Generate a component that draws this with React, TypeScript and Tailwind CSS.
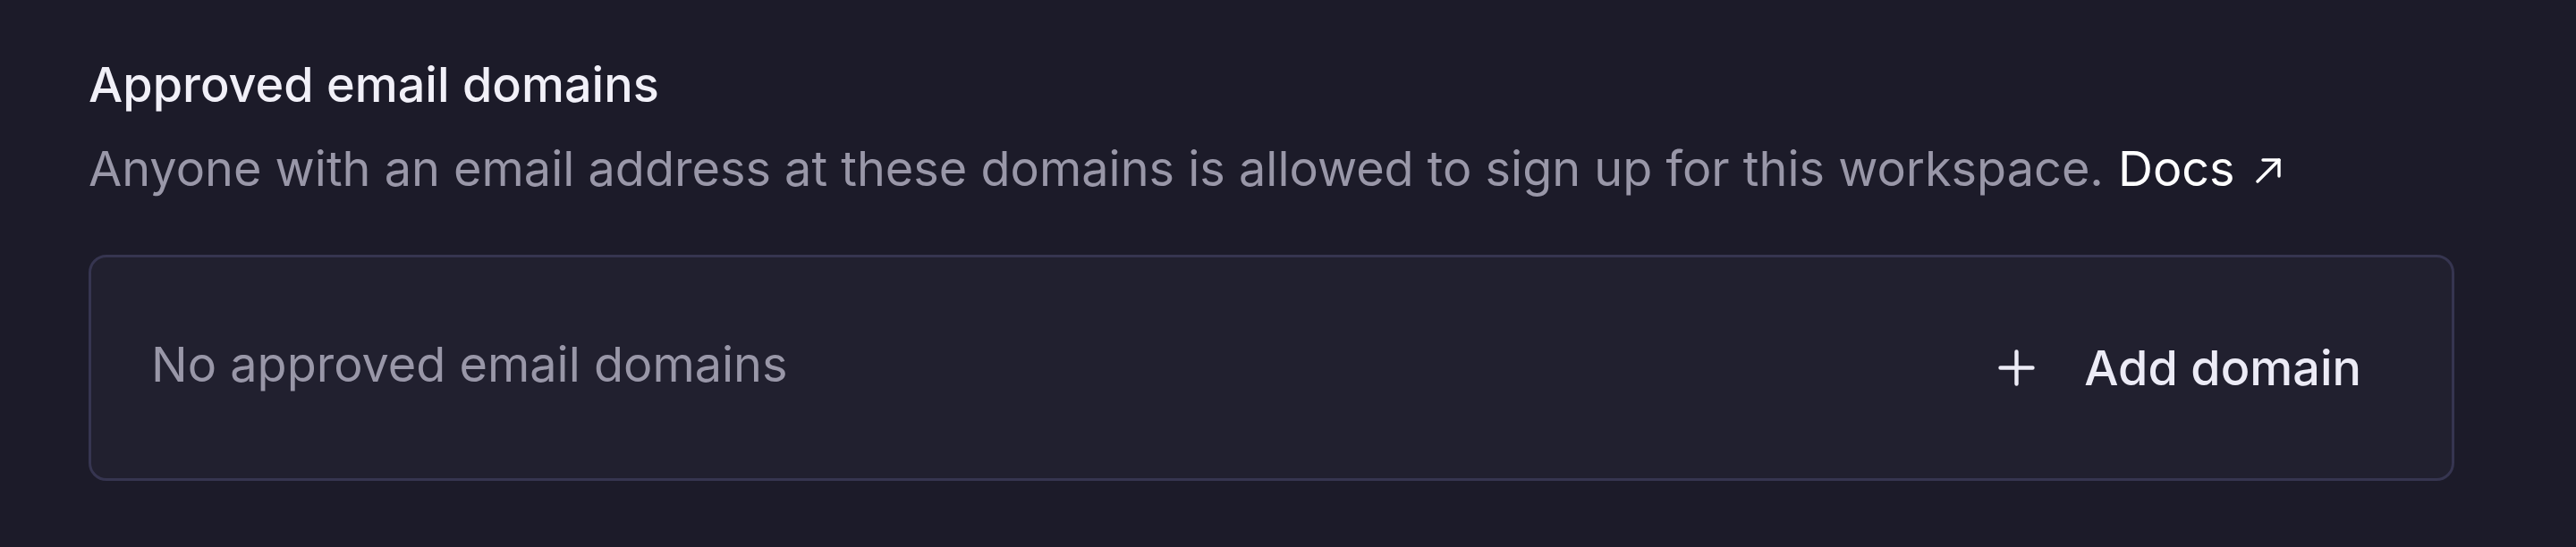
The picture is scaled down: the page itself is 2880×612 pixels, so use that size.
import React from 'react';

const App = () => {
  return (
    <div
      className="w-[2880px] h-[612px] bg-[#1c1b29] pl-[99px] pr-[136px] pt-[63px]"
      style={{ fontFamily: 'Inter, "Noto Sans", sans-serif' }}
    >
      <h2 className="text-[54px] leading-[64px] font-medium text-[#f1f0f8]">Approved email domains</h2>
      <p className="mt-[30px] text-[54px] leading-[64px] text-[#9997a8] flex items-center">
        Anyone with an email address at these domains is allowed to sign up for this workspace.
        <a href="#docs" className="ml-[16px] text-white flex items-center gap-[22px]">
          Docs
          <svg width="30" height="30" viewBox="0 0 30 30" fill="none" stroke="currentColor" strokeWidth="3.4" strokeLinecap="round" strokeLinejoin="round" className="mt-[4px]">
            <path d="M3 27 27 3" />
            <path d="M9 3h18v18" />
          </svg>
        </a>
      </p>
      <div className="mt-[64px] h-[253px] rounded-[20px] border-[3px] border-[#363550] bg-[#21202f] flex items-center justify-between pl-[67px] pr-[101px]">
        <span className="mb-[8px] text-[54px] leading-[64px] text-[#9997a8]">No approved email domains</span>
        <button className="flex items-center gap-[55px] text-[54px] leading-[64px] font-medium text-[#ecebf6]">
          <svg width="41" height="41" viewBox="0 0 41 41" fill="none" stroke="currentColor" strokeWidth="4.4" strokeLinecap="round">
            <path d="M20.5 2.5v36M2.5 20.5h36" />
          </svg>
          Add domain
        </button>
      </div>
    </div>
  );
};

export default App;
